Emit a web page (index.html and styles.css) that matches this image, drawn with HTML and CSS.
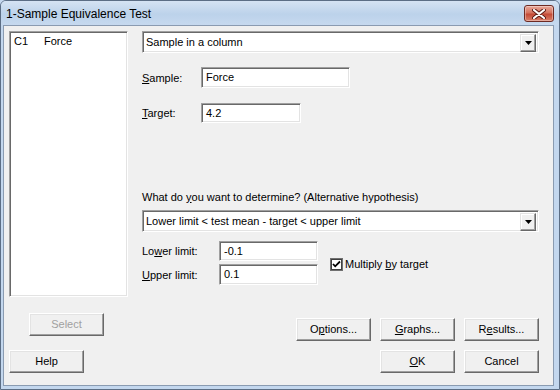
FILE: index.html
```html
<!DOCTYPE html>
<html lang="en">

<head>
    <meta charset="UTF-8">
    <title>1-Sample Equivalence Test</title>
    <link rel="stylesheet" href="styles.css">
</head>

<body>
    <div class="window">
        <div class="titlebar">
            <span class="title">1-Sample Equivalence Test</span>
            <div class="close">
                <svg width="14" height="10" viewBox="0 0 14 10">
                    <path d="M2 1 L12 9 M12 1 L2 9" stroke="#5a1a14" stroke-width="4" stroke-linecap="round" />
                    <path d="M2 1 L12 9 M12 1 L2 9" stroke="#fff" stroke-width="2.2" stroke-linecap="round" />
                </svg>
            </div>
        </div>

        <div class="client">
            <div class="main">
                <div class="left">
                    <div class="listbox">
                        <div class="item"><span class="col">C1</span><span>Force</span></div>
                    </div>
                    <div class="btn select">Select</div>
                </div>

                <div class="right">
                    <div class="combo">
                        <span>Sample in a column</span>
                        <div class="arrow"><svg width="7" height="4" viewBox="0 0 7 4"><path d="M0 0 H7 L3.5 4 Z" fill="#000" /></svg></div>
                    </div>

                    <div class="row sample">
                        <label class="lbl"><u>S</u>ample:</label>
                        <div class="edit big">Force</div>
                    </div>
                    <div class="row target">
                        <label class="lbl"><u>T</u>arget:</label>
                        <div class="edit small">4.2</div>
                    </div>

                    <p class="question">What do <u>y</u>ou want to determine? (Alternative hypothesis)</p>
                    <div class="combo second">
                        <span>Lower limit &lt; test mean - target &lt; upper limit</span>
                        <div class="arrow"><svg width="7" height="4" viewBox="0 0 7 4"><path d="M0 0 H7 L3.5 4 Z" fill="#000" /></svg></div>
                    </div>

                    <div class="limits">
                        <div class="limitcol">
                            <div class="row">
                                <label class="lbl wide">Lo<u>w</u>er limit:</label>
                                <div class="edit limit">-0.1</div>
                            </div>
                            <div class="row upper">
                                <label class="lbl wide"><u>U</u>pper limit:</label>
                                <div class="edit limit tall">0.1</div>
                            </div>
                        </div>
                        <div class="check">
                            <svg width="13" height="13" viewBox="0 0 13 13">
                                <rect x="0.5" y="0.5" width="12" height="12" fill="#fff" stroke="#707070" />
                                <rect x="1.5" y="1.5" width="10" height="10" fill="none" stroke="#404040" />
                                <path d="M3 6 L5.2 8.3 L10 3.5" fill="none" stroke="#000" stroke-width="1.8" />
                            </svg>
                            <span>Multiply <u>b</u>y target</span>
                        </div>
                    </div>

                    <div class="btnrow">
                        <div class="btn">O<u>p</u>tions...</div>
                        <div class="btn"><u>G</u>raphs...</div>
                        <div class="btn">R<u>e</u>sults...</div>
                    </div>
                </div>
            </div>

            <div class="bottom">
                <div class="btn">Help</div>
                <div class="btnrow last">
                    <div class="btn"><u>O</u>K</div>
                    <div class="btn">Cancel</div>
                </div>
            </div>
        </div>
    </div>
</body>

</html>
```

FILE: styles.css
```css
* {
    margin: 0;
    padding: 0;
    box-sizing: border-box;
}

body {
    width: 560px;
    height: 390px;
    overflow: hidden;
    font-family: "Liberation Sans", Arial, sans-serif;
    font-size: 11px;
    color: #000;
    background: #c4d7ee;
}

.window {
    width: 560px;
    height: 390px;
    border: 1px solid #5c6e85;
    border-radius: 6px 6px 0 0;
    padding: 0 5px 3px 2px;
    background: #c3d7ee;
    display: flex;
    flex-direction: column;
}

/* title bar */
.titlebar {
    height: 24px;
    display: flex;
    justify-content: space-between;
    align-items: flex-start;
    padding-left: 4px;
    background: linear-gradient(#d5e3f3, #bcd2ea 55%, #c6d9ef);
    margin: 0 -5px 0 -2px;
    padding-right: 5px;
    border-radius: 5px 5px 0 0;
}

.title {
    font-size: 12px;
    line-height: 14px;
    margin-top: 6px;
    margin-left: 1px;
}

.close {
    width: 30px;
    height: 17px;
    margin-top: 4px;
    border: 1px solid #6d2a23;
    border-radius: 3px;
    background: linear-gradient(#e9a99b, #d4735f 45%, #c44a36 55%, #d9806a);
    display: flex;
    align-items: center;
    justify-content: center;
    box-shadow: inset 0 0 0 1px rgba(255, 255, 255, 0.35);
}

.client {
    flex: 1;
    border: 1px solid #8a9bb1;
    background: #f0f0f0;
}

.main {
    display: flex;
    padding: 5px 0 0 5px;
}

.left {
    width: 119px;
}

.listbox {
    height: 266px;
    background: #fff;
    border: 1px solid;
    border-color: #a0a0a0 #fff #fff #a0a0a0;
    box-shadow: inset 1px 1px #696969, inset -1px -1px #e3e3e3;
    padding: 3px 0 0 4px;
}

.item {
    display: flex;
    line-height: 13px;
}

.col {
    width: 30px;
}

/* buttons */
.btn {
    width: 75px;
    height: 23px;
    border: 1px solid;
    border-color: #fff #696969 #696969 #fff;
    box-shadow: inset -1px -1px #a0a0a0, inset 1px 1px #e3e3e3;
    background: #f0f0f0;
    display: flex;
    align-items: center;
    justify-content: center;
    line-height: 13px;
}

.select {
    margin: 16px 0 0 20px;
    color: #a0a0a0;
}

.right {
    width: 397px;
    margin-left: 14px;
}

.combo {
    height: 22px;
    display: flex;
    justify-content: space-between;
    background: #fff;
    border: 1px solid;
    border-color: #a0a0a0 #fff #fff #a0a0a0;
    box-shadow: inset 1px 1px #696969, inset -1px -1px #e3e3e3;
    padding: 2px 2px 2px 3px;
    line-height: 17px;
}

.arrow {
    width: 16px;
    height: 18px;
    border: 1px solid;
    border-color: #e3e3e3 #696969 #696969 #e3e3e3;
    box-shadow: inset -1px -1px #a0a0a0, inset 1px 1px #fff;
    background: #f0f0f0;
    display: flex;
    align-items: center;
    justify-content: center;
}

.row {
    display: flex;
    align-items: center;
}

.lbl {
    width: 59px;
}

.lbl.wide {
    width: 77px;
}

.edit {
    height: 20px;
    background: #fff;
    border: 1px solid;
    border-color: #a0a0a0 #fff #fff #a0a0a0;
    box-shadow: inset 1px 1px #696969, inset -1px -1px #e3e3e3;
    padding: 0 4px;
    line-height: 18px;
}

.big {
    width: 149px;
    height: 21px;
}

.small {
    width: 100px;
}

.sample {
    margin-top: 14px;
}

.target {
    margin-top: 15px;
}

.question {
    margin-top: 68px;
    line-height: 13px;
}

.second {
    margin-top: 6px;
}

.limits {
    display: flex;
    align-items: center;
    margin-top: 9px;
}

.limit {
    width: 99px;
}

.tall {
    height: 21px;
}

.upper {
    margin-top: 3px;
}

.check {
    display: flex;
    align-items: center;
    margin-left: 12px;
    margin-top: 2px;
}

.check svg {
    margin-right: 2px;
}

.btnrow {
    display: flex;
    justify-content: flex-end;
    gap: 9px;
    margin-top: 33px;
}

.bottom {
    display: flex;
    justify-content: space-between;
    padding: 0 14px 0 5px;
    margin-top: 9px;
}

.btnrow.last {
    margin-top: 0;
}
```
